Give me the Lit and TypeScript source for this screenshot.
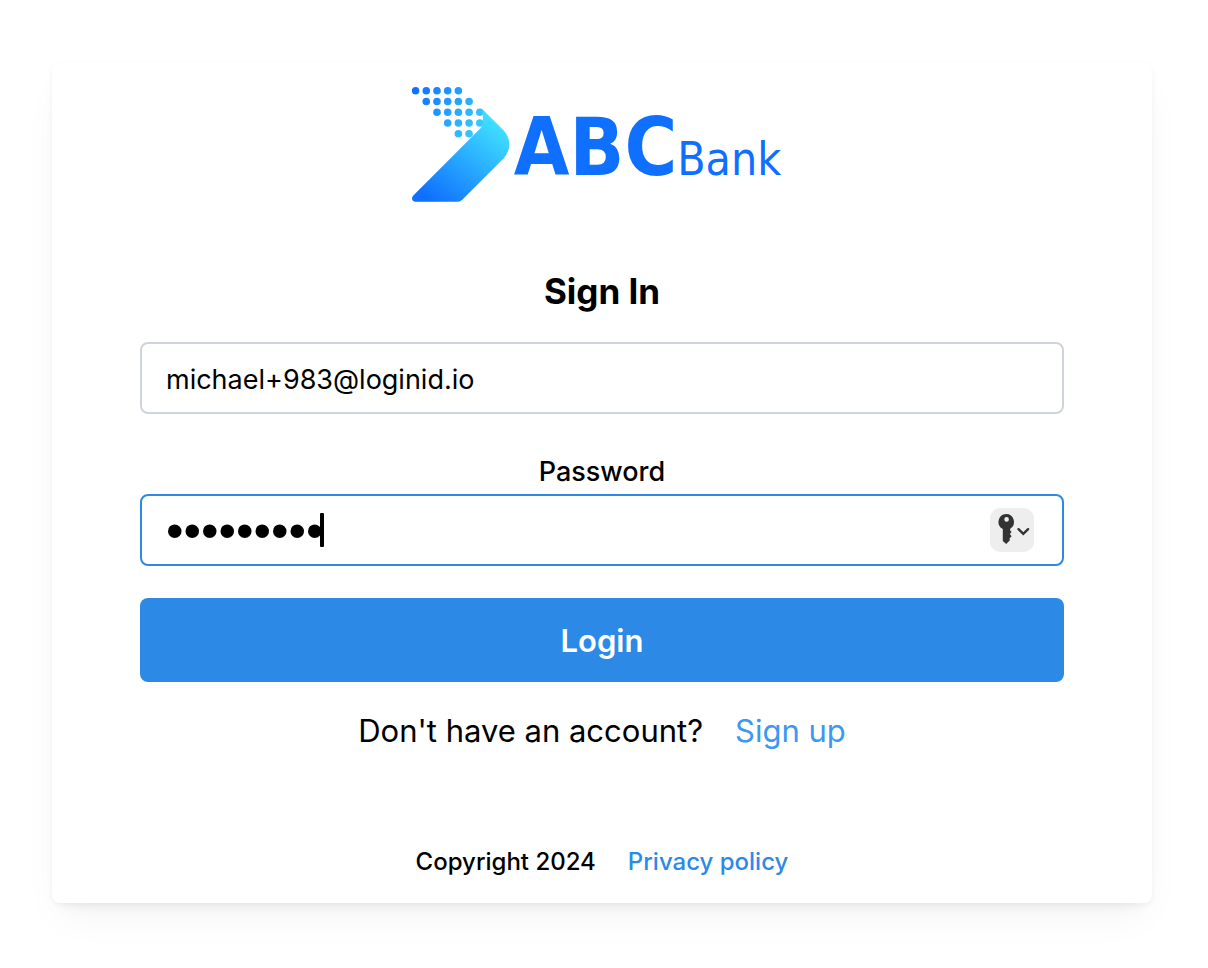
import { LitElement, html, svg, css } from "lit";
import { customElement, state } from "lit/decorators.js";

const DOT_ROWS: Array<[number, number]> = [
  [0, 4],
  [1, 5],
  [2, 6],
  [3, 6],
  [4, 5],
];

@customElement("bank-logo")
class BankLogo extends LitElement {
  static styles = css`
    :host {
      display: flex;
      justify-content: center;
      color: #0f6fff;
      font-family: "DejaVu Sans Condensed", "DejaVu Sans", sans-serif;
    }
    .mark {
      width: 98px;
      height: 116px;
      flex: none;
    }
    .name {
      display: flex;
      align-items: baseline;
      padding: 14px 11px 0 4px;
      line-height: 96px;
      height: 96px;
    }
    .abc {
      font-size: 80px;
      font-weight: 700;
    }
    .bank {
      font-size: 46px;
    }
  `;

  render() {
    const dots = DOT_ROWS.flatMap(([from, to], row) =>
      Array.from({ length: to - from + 1 }, (_, i) => svg`
        <circle cx=${3.6 + (from + i) * 10.7} cy=${4.8 + row * 10.75} r="3.8"></circle>`)
    );
    return html`
      <svg class="mark" viewBox="0 0 98 116" aria-hidden="true">
        <defs>
          <linearGradient id="dots" gradientUnits="userSpaceOnUse" x1="2" y1="4" x2="72" y2="50">
            <stop offset="0" stop-color="#0f6fff"></stop>
            <stop offset="1" stop-color="#3ad6ff"></stop>
          </linearGradient>
          <linearGradient id="arrow" gradientUnits="userSpaceOnUse" x1="20" y1="116" x2="84" y2="36">
            <stop offset="0" stop-color="#0f6fff"></stop>
            <stop offset="1" stop-color="#40e0ff"></stop>
          </linearGradient>
        </defs>
        <g fill="url(#dots)">${dots}</g>
        <path
          fill="url(#arrow)"
          d="M70.7 23.5 92 44.8Q97.3 50.8 97.3 58.3T92 71.9L50 114Q48.3 115.8 46 115.8H3.5C.2 115.8-1.2 112 1.3 109.5L68.3 42.5Q71 39.8 70.9 37Z"
        ></path>
      </svg>
      <div class="name"><span class="abc">ABC</span><span class="bank">Bank</span></div>
    `;
  }
}

@customElement("app-root")
class AppRoot extends LitElement {
  @state() private email = "michael+983@loginid.io";
  @state() private password = "password1";

  static styles = css`
    :host {
      display: block;
      box-sizing: border-box;
      min-height: 100vh;
      padding: 63px 56px 65px 52px;
      background: #fff;
      color: #000;
      font-family: Inter, sans-serif;
    }
    .card {
      padding: 23px 88px;
      border-radius: 8px;
      background: #fff;
      box-shadow:
        0 2px 6px rgba(0, 0, 0, 0.05),
        0 20px 40px -10px rgba(0, 0, 0, 0.05),
        0 14px 14px -10px rgba(0, 0, 0, 0.04);
    }
    h1 {
      margin: 67px 0 29px;
      font-size: 35px;
      line-height: 44px;
      font-weight: 700;
      text-align: center;
    }
    form {
      display: flex;
      flex-direction: column;
    }
    input {
      box-sizing: border-box;
      width: 100%;
      height: 72px;
      margin: 0;
      padding: 2px 24px 0;
      border: 2px solid #ced4da;
      border-radius: 8px;
      background: #fff;
      color: #000;
      font: 400 27px Inter, sans-serif;
      outline: none;
    }
    label {
      margin-top: 36px;
      font-size: 27px;
      line-height: 44px;
      font-weight: 500;
      text-align: center;
    }
    .field {
      position: relative;
    }
    .field input {
      border-color: #2c8ae6;
      font: 400 50px "Liberation Sans", sans-serif;
    }
    .caret {
      position: absolute;
      left: 180px;
      top: 19px;
      width: 4px;
      height: 34px;
      border-radius: 1px;
      background: #000;
    }
    .keys {
      position: absolute;
      right: 30px;
      top: 14px;
      width: 44px;
      height: 44px;
      padding: 0;
      border: 0;
      border-radius: 10px;
      background: #eee;
    }
    .keys svg {
      display: block;
    }
    .login {
      height: 84px;
      margin-top: 32px;
      padding: 0;
      border: 0;
      border-radius: 8px;
      background: #2c8ae6;
      color: #fff;
      font: 600 31px Inter, sans-serif;
    }
    .line {
      display: flex;
      justify-content: center;
      gap: 32px;
    }
    a {
      color: #2c8ae6;
      text-decoration: none;
    }
    .signup {
      margin: 24px 0 88px;
      font-size: 31px;
      line-height: 50px;
    }
    .signup a {
      color: #3d98f0;
    }
    footer {
      font-size: 24px;
      line-height: 36px;
      font-weight: 500;
    }
  `;

  render() {
    return html`
      <main class="card">
        <bank-logo role="img" aria-label="ABC Bank"></bank-logo>
        <h1>Sign In</h1>
        <form @submit=${(e: Event) => e.preventDefault()}>
          <input type="email" aria-label="Email" .value=${this.email} />
          <label for="password">Password</label>
          <div class="field">
            <input id="password" type="password" .value=${this.password} />
            <span class="caret"></span>
            <button class="keys" type="button" aria-label="Saved passwords">
              <svg width="44" height="44" viewBox="0 0 44 44" aria-hidden="true">
                <path
                  fill="#333"
                  fill-rule="evenodd"
                  d="M16 6a8 8 0 0 1 4.2 14.8v1.6l1.4 1.7-1.7 2 1.7 2.2-2.1 2.3.4 1.7L16.2 36 12.8 33V21.1A8 8 0 0 1 16 6Zm.6 3.1a2.3 2.3 0 1 0 0 4.6 2.3 2.3 0 0 0 0-4.6Z"
                ></path>
                <path d="m28.5 21.2 4.8 4.6 4.8-4.6" fill="none" stroke="#333" stroke-width="2.4" stroke-linecap="round"></path>
              </svg>
            </button>
          </div>
          <button class="login" type="submit">Login</button>
        </form>
        <p class="line signup"><span>Don't have an account?</span><a href="#signup">Sign up</a></p>
        <footer class="line"><span>Copyright 2024</span><a href="#privacy">Privacy policy</a></footer>
      </main>
    `;
  }
}
